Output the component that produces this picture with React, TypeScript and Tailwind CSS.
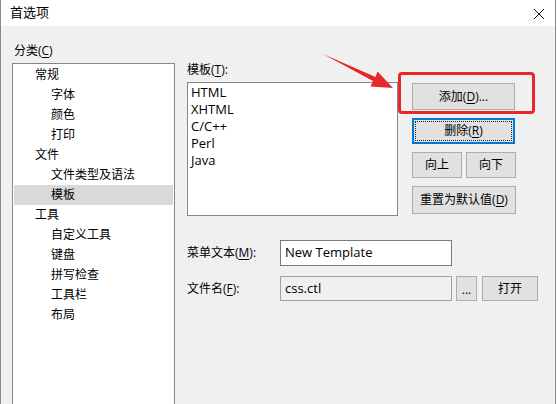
import * as React from "react";

const ui = "font-['Open_Sans','Noto_Sans_CJK_SC',sans-serif]";

// tree nodes: depth 0 = group, 1 = child
const tree: { label: string; depth: number; selected?: boolean }[] = [
  { label: "常规", depth: 0 },
  { label: "字体", depth: 1 },
  { label: "颜色", depth: 1 },
  { label: "打印", depth: 1 },
  { label: "文件", depth: 0 },
  { label: "文件类型及语法", depth: 1 },
  { label: "模板", depth: 1, selected: true },
  { label: "工具", depth: 0 },
  { label: "自定义工具", depth: 1 },
  { label: "键盘", depth: 1 },
  { label: "拼写检查", depth: 1 },
  { label: "工具栏", depth: 1 },
  { label: "布局", depth: 1 },
];

const templates = ["HTML", "XHTML", "C/C++", "Perl", "Java"];

function Btn({
  children,
  className = "",
  focused = false,
}: {
  children: React.ReactNode;
  className?: string;
  focused?: boolean;
}) {
  return (
    <div
      className={`flex items-center justify-center bg-[#e1e1e1] text-[12px] text-black ${
        focused ? "border-2 border-[#0078d7] p-px" : "border border-[#adadad]"
      } ${className}`}
    >
      {focused ? (
        <div className="flex h-full w-full items-center justify-center border border-dotted border-[#222]">
          {children}
        </div>
      ) : (
        children
      )}
    </div>
  );
}

const U = ({ c }: { c: string }) => <span className="underline underline-offset-2">{c}</span>;

export default function App() {
  return (
    <div className={`relative h-[404px] w-[558px] overflow-hidden bg-white ${ui}`}>
      <div className="flex h-full w-[556px] flex-col border-l border-r border-[#8a8a8a]">
        {/* title bar */}
        <div className="flex h-[26px] shrink-0 items-center justify-between bg-white pl-[9px] pr-[8px]">
          <span className="text-[13px] text-black">首选项</span>
          <svg width="12" height="12" viewBox="0 0 12 12" className="mr-[2px] mt-px">
            <path d="M1 1 L11 11 M11 1 L1 11" stroke="#111" strokeWidth="1" />
          </svg>
        </div>

        {/* dialog body */}
        <div className="flex flex-1 bg-[#f0f0f0] pl-[11px] pt-[17px] text-[12px] text-black">
          <div className="flex flex-col">
            <div className="h-[16px] pl-[2px] leading-[16px]">
              分类(<U c="C" />)
            </div>
            <div className="mt-[4px] h-[400px] w-[163px] border border-[#828790] bg-white pt-px">
              {tree.map((n) => (
                <div
                  key={n.label}
                  className={`h-[20px] leading-[20px] ${n.depth ? "pl-[38px]" : "pl-[22px]"} ${
                    n.selected ? "mx-px bg-[#d9d9d9] !pl-[37px]" : ""
                  }`}
                >
                  {n.label}
                </div>
              ))}
            </div>
          </div>

          <div className="ml-[12px] mt-[19px] flex flex-col">
            <div className="h-[16px] leading-[16px]">
              模板(<U c="T" />):
            </div>
            <div className="mt-[4px] flex">
              <div className="h-[134px] w-[211px] border border-[#828790] bg-white pl-[3px] pt-px text-[13px] leading-[17px]">
                {templates.map((t) => (
                  <div key={t}>{t}</div>
                ))}
              </div>
              <div className="ml-[14px] mt-px flex flex-col gap-[8px]">
                <Btn className="h-[27px] w-[103px]">
                  添加(<U c="D" />)...
                </Btn>
                <Btn className="h-[26px] w-[103px]" focused>
                  删除(<U c="R" />)
                </Btn>
                <div className="flex gap-[4px]">
                  <Btn className="h-[26px] w-[50px]">向上</Btn>
                  <Btn className="h-[26px] w-[50px]">向下</Btn>
                </div>
                <Btn className="h-[28px] w-[104px]">
                  重置为默认值(<U c="D" />)
                </Btn>
              </div>
            </div>

            <div className="mt-[24px] flex items-center">
              <div className="w-[93px]">
                菜单文本(<U c="M" />):
              </div>
              <div className="flex h-[26px] w-[172px] items-center border border-[#7a7a7a] bg-white pl-[4px] text-[13px]">
                New Template
              </div>
            </div>
            <div className="mt-[10px] flex items-center">
              <div className="w-[93px]">
                文件名(<U c="F" />):
              </div>
              <div className="flex h-[25px] w-[172px] items-center border border-[#a0a0a0] bg-[#f0f0f0] pl-[4px] text-[13px]">
                css.ctl
              </div>
              <Btn className="ml-[4px] h-[25px] w-[21px] !items-end pb-[4px] text-[10px] leading-none">...</Btn>
              <Btn className="ml-[5px] h-[25px] w-[56px]">打开</Btn>
            </div>
          </div>
        </div>
      </div>

      {/* annotation: red frame and arrow */}
      <div className="absolute left-[398px] top-[72px] h-[42px] w-[137px] rounded-[4px] border-[3px] border-[#e8272b]" />
      <svg className="absolute left-0 top-0" width="558" height="404" viewBox="0 0 558 404">
        <polygon
          points="323,54 375.5,77 377.5,71.5 393,88 370.5,86.5 373,81"
          fill="#e8272b"
        />
      </svg>
    </div>
  );
}
